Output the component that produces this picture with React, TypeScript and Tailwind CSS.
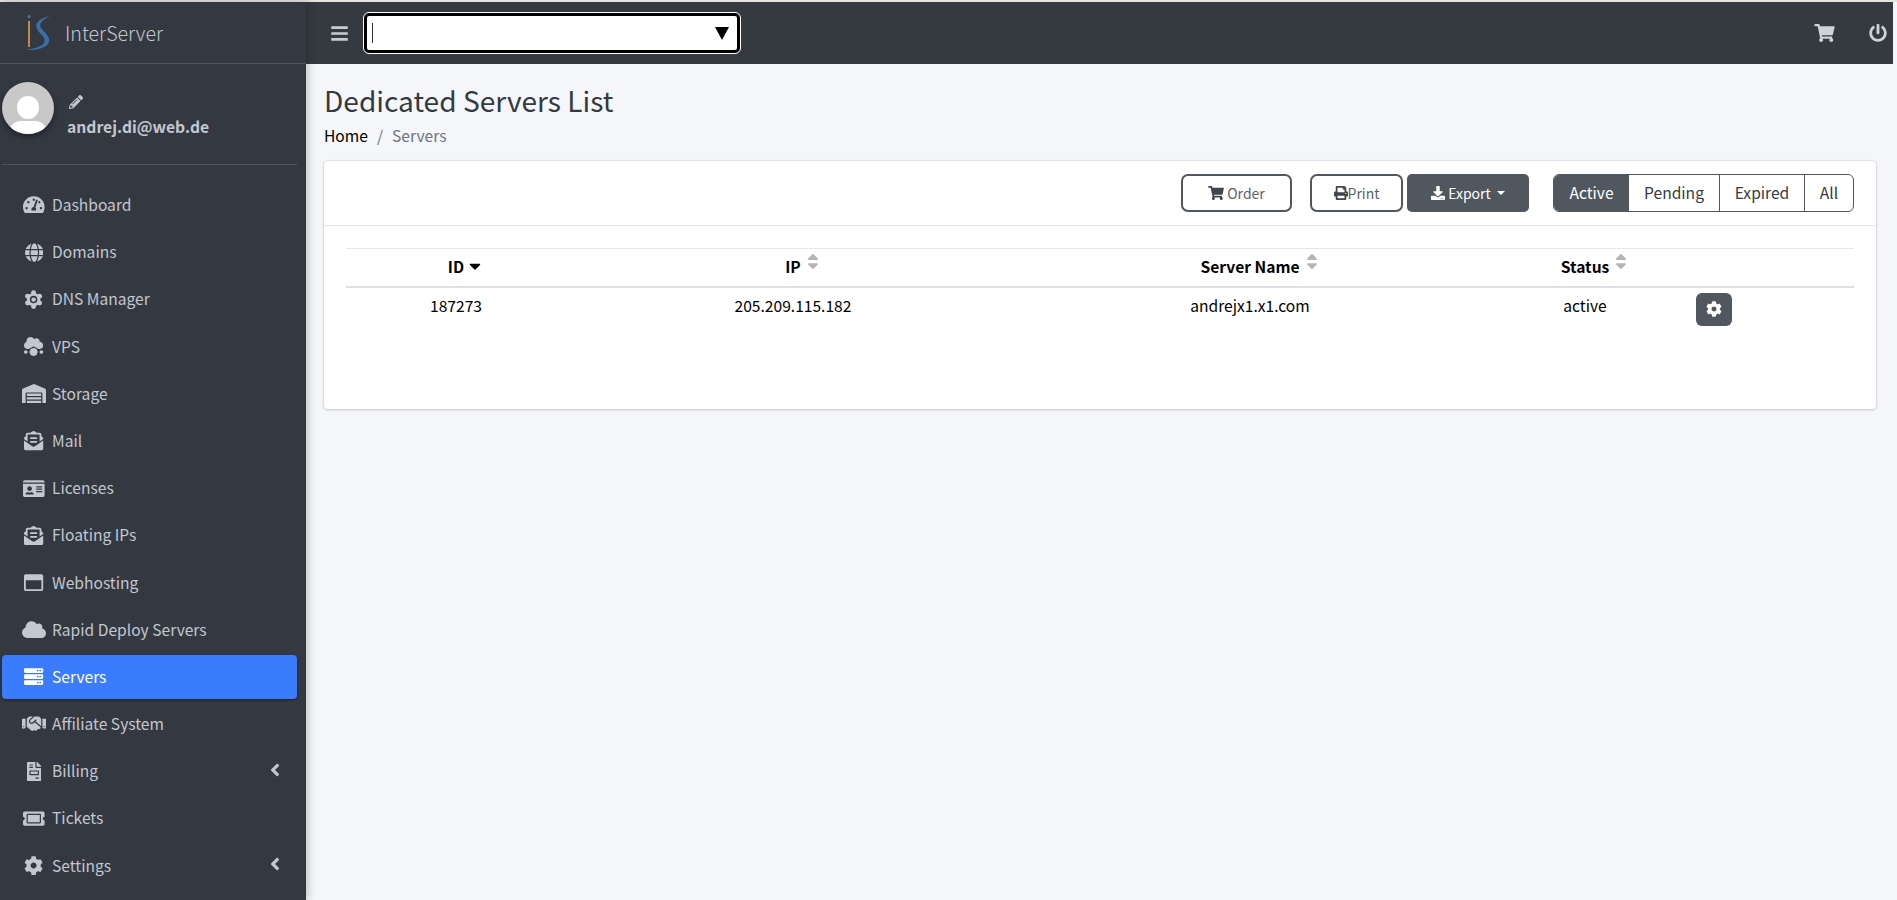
import React from "react";
import {
  FaTachometerAlt, FaGlobe, FaCloudMeatball, FaWarehouse, FaEnvelopeOpenText, FaIdCard,
  FaRegWindowMaximize, FaCloud, FaServer, FaHandshake, FaFileInvoice, FaTicketAlt, FaCog, FaAngleLeft,
  FaPencilAlt, FaBars, FaShoppingCart, FaPowerOff, FaPrint, FaDownload, FaSortUp, FaSortDown, FaCaretDown,
} from "react-icons/fa";

function DnsIcon({ className }: { className?: string }) {
  const lobes = [0, 60, 120, 180, 240, 300];
  return (
    <svg viewBox="0 0 20 20" className={className} fill="currentColor">
      <circle cx="10" cy="10" r="7" />
      {lobes.map((a) => (
        <circle
          key={a}
          cx={10 + 7.2 * Math.sin((a * Math.PI) / 180)}
          cy={10 - 7.2 * Math.cos((a * Math.PI) / 180)}
          r="2.6"
        />
      ))}
      <circle cx="10" cy="10" r="3.9" fill="#343841" />
      <circle cx="10" cy="10" r="2.3" />
    </svg>
  );
}

const items: { label: string; icon: React.ComponentType<{ className?: string }>; w: string; active?: boolean; arrow?: boolean }[] = [
  { label: "Dashboard", icon: FaTachometerAlt, w: "w-[21.6px]" },
  { label: "Domains", icon: FaGlobe, w: "w-[18.6px]" },
  { label: "DNS Manager", icon: DnsIcon, w: "w-[19.2px]" },
  { label: "VPS", icon: FaCloudMeatball, w: "w-[19.2px]" },
  { label: "Storage", icon: FaWarehouse, w: "w-[24px]" },
  { label: "Mail", icon: FaEnvelopeOpenText, w: "w-[19.2px]" },
  { label: "Licenses", icon: FaIdCard, w: "w-[21.6px]" },
  { label: "Floating IPs", icon: FaEnvelopeOpenText, w: "w-[19.2px]" },
  { label: "Webhosting", icon: FaRegWindowMaximize, w: "w-[19.2px]" },
  { label: "Rapid Deploy Servers", icon: FaCloud, w: "w-[24px]" },
  { label: "Servers", icon: FaServer, w: "w-[19.2px]", active: true },
  { label: "Affiliate System", icon: FaHandshake, w: "w-[24px]" },
  { label: "Billing", icon: FaFileInvoice, w: "w-[14.4px]", arrow: true },
  { label: "Tickets", icon: FaTicketAlt, w: "w-[21.6px]" },
  { label: "Settings", icon: FaCog, w: "w-[19.2px]", arrow: true },
];

function Sort({ children, active }: { children: React.ReactNode; active?: boolean }) {
  return (
    <span className="relative inline-block">
      {children}
      {active ? (
        <FaCaretDown className="absolute left-[calc(100%+3px)] top-[2px] h-[18px] w-[16px] text-black" />
      ) : (
        <span className="absolute left-[calc(100%+5px)] top-[-3px] block h-[18px] w-[14px] text-[#b5b5b5]">
          <FaSortUp className="absolute left-0 top-0 h-[18px] w-[14px]" />
          <FaSortDown className="absolute left-0 top-[1px] h-[18px] w-[14px]" />
        </span>
      )}
    </span>
  );
}

export default function App() {
  return (
    <div className="flex h-[900px] w-[1897px] flex-col overflow-hidden bg-[#f4f6f9] font-['Noto_Sans_CJK_JP','Liberation_Sans',sans-serif] text-[15.6px] text-black">
      <div className="h-[2px] w-full shrink-0 bg-[#e4e4e4]" />
      <div className="flex min-h-0 flex-1">
        <aside className="z-10 flex w-[306px] shrink-0 flex-col bg-[#343841] shadow-[2px_0_8px_rgba(0,0,0,0.22)]">
          <div className="flex h-[62px] shrink-0 items-center border-b border-[#4b545c] pl-[24px]">
            <svg viewBox="0 0 30 40" className="h-[40px] w-[30px]">
              <circle cx="5" cy="3.5" r="1.6" fill="#3f78b5" />
              <rect x="4" y="8" width="2" height="26" fill="#c98a35" />
              <path d="M26 3 C16 5 10 10 13 16 C16 22 23 24 20 30 C17 34 8 36 2 37 C10 37.5 20 36 24 31 C28 25 21 20 17 15 C14 10 20 6 26 3 Z" fill="#3c6fa8" />
            </svg>
            <span className="ml-[11px] text-[19.6px] font-light leading-none text-[#c5c9cf]">InterServer</span>
          </div>
          <div className="mx-[2px] mr-[9px] flex h-[101px] shrink-0 items-start border-b border-[#4f5660] pt-[18px]">
            <div className="relative h-[52px] w-[52px] shrink-0 overflow-hidden rounded-full bg-[#c8c8c8] shadow-[0_3px_6px_rgba(0,0,0,0.4)]">
              <div className="absolute left-[15px] top-[14px] h-[23px] w-[22px] rounded-full bg-white" />
              <div className="absolute left-[8px] top-[39px] h-[20px] w-[36px] rounded-full bg-white" />
            </div>
            <div className="ml-[13px] mt-[13px]">
              <FaPencilAlt className="mb-[6px] ml-[2px] h-[14px] w-[14px] text-[#c2c7d0]" />
              <div className="text-[15.7px] font-bold leading-[24px] text-[#c2c7d0]">andrej.di@web.de</div>
            </div>
          </div>
          <nav className="mx-[2px] mr-[9px] mt-[18px]">
            {items.map((it) => {
              const Icon = it.icon;
              return (
                <div
                  key={it.label}
                  className={`mb-[3.2px] flex h-[44px] items-center rounded-[4px] pl-[19px] pr-[16px] ${it.active ? "bg-[#3b7cff] text-white shadow-[0_1px_3px_rgba(0,0,0,0.4)]" : "text-[#c2c7d0]"}`}
                >
                  <span className="mr-[5px] flex w-[26px] shrink-0 justify-center">
                    <Icon className={`h-[19.2px] shrink-0 ${it.w}`} />
                  </span>
                  <span className="mb-[2px] flex-1 leading-[24px]">{it.label}</span>
                  {it.arrow && <FaAngleLeft className="mb-[3px] mr-0 h-[20px] w-[12px]" />}
                </div>
              );
            })}
          </nav>
        </aside>
        <div className="flex min-w-0 flex-1 flex-col">
          <header className="mr-[4px] flex h-[62px] shrink-0 items-center bg-[#343a40]">
            <FaBars className="ml-[25px] h-[19px] w-[17px] text-[#c8cbcf]" />
            <div className="ml-[16px] flex h-[40px] w-[376px] items-center rounded-[5px] border-[3px] border-black bg-white pl-[5px] pr-[8px] outline-1 outline-white">
              <span className="h-[20px] w-px bg-[#333]" />
              <span className="ml-auto h-0 w-0 border-x-[7px] border-t-[13px] border-x-transparent border-t-black" />
            </div>
            <FaShoppingCart className="ml-auto h-[18px] w-[21px] text-[#cfd2d6]" />
            <FaPowerOff className="ml-[34px] mr-[6px] h-[18px] w-[18px] text-[#cfd2d6]" />
          </header>
          <main className="min-h-0 flex-1 pl-[18px] pr-[21px]">
            <h1 className="mt-[17px] text-[28.1px] font-normal leading-[38px] text-[#343a40]">Dedicated Servers List</h1>
            <div className="mt-[4px] flex h-[24px] items-center leading-[24px]">
              <span className="text-black">Home</span>
              <span className="mx-[9px] text-[#6c757d]">/</span>
              <span className="text-[#6c757d]">Servers</span>
            </div>
            <section className="mt-[14px] h-[248px] rounded-[4px] bg-white shadow-[0_0_2px_rgba(0,0,0,0.2),0_1px_3px_rgba(0,0,0,0.15)]">
              <div className="flex h-[65px] items-center justify-end border-b border-[#e3e5e8] pr-[22px]">
                <button className="flex h-[38px] w-[111px] items-center justify-center rounded-[7px] border-2 border-[#50575e] text-[14px] text-[#5a6268]">
                  <FaShoppingCart className="mr-[3px] h-[14px] w-[16px] text-[#40464d]" />Order
                </button>
                <button className="ml-[18px] flex h-[38px] w-[93px] items-center justify-center rounded-[7px] border-2 border-[#50575e] text-[14px] text-[#5a6268]">
                  <FaPrint className="h-[14px] w-[14px] text-[#40464d]" />Print
                </button>
                <button className="ml-[4px] flex h-[38px] w-[122px] items-center justify-center rounded-[5px] bg-[#50575f] text-[14px] text-white">
                  <FaDownload className="mr-[3px] h-[14px] w-[14px]" />Export
                  <span className="ml-[6px] h-0 w-0 border-x-[4px] border-t-[4px] border-x-transparent border-t-white" />
                </button>
                <div className="ml-[24px] flex h-[38px] overflow-hidden rounded-[6px] border border-[#50575f] text-[15.6px] text-[#343a40]">
                  <span className="flex w-[75px] items-center justify-center bg-[#50575f] text-white">Active</span>
                  <span className="flex w-[91px] items-center justify-center border-r border-[#50575f]">Pending</span>
                  <span className="flex w-[85px] items-center justify-center border-r border-[#50575f]">Expired</span>
                  <span className="flex w-[48px] items-center justify-center">All</span>
                </div>
              </div>
              <div className="pl-[22px] pr-[22px] pt-[22px]">
                <table className="w-full table-fixed border-collapse text-center text-[15.6px]">
                  <thead>
                    <tr className="h-[38px] border-b-[2px] border-t border-b-[#dee2e6] border-t-[#e6e8ea]">
                      <th className="w-[220px] pb-[2px] font-bold"><Sort active>ID</Sort></th>
                      <th className="w-[454px] pb-[2px] font-bold"><Sort>IP</Sort></th>
                      <th className="w-[460px] pb-[2px] font-bold"><Sort>Server Name</Sort></th>
                      <th className="w-[210px] pb-[2px] font-bold"><Sort>Status</Sort></th>
                      <th />
                    </tr>
                  </thead>
                  <tbody>
                    <tr>
                      <td className="pb-[11px] pt-[1px] align-top leading-[32px]">187273</td>
                      <td className="pb-[11px] pt-[1px] align-top leading-[32px]">205.209.115.182</td>
                      <td className="pb-[11px] pt-[1px] align-top leading-[32px]">andrejx1.x1.com</td>
                      <td className="pb-[11px] pt-[1px] align-top leading-[32px]">active</td>
                      <td className="pt-[5px] text-left align-top">
                        <span className="ml-[6px] flex h-[33px] w-[36px] items-center justify-center rounded-[6px] bg-[#50575f]">
                          <FaCog className="h-[16px] w-[16px] text-white" />
                        </span>
                      </td>
                    </tr>
                  </tbody>
                </table>
              </div>
            </section>
          </main>
        </div>
      </div>
    </div>
  );
}
